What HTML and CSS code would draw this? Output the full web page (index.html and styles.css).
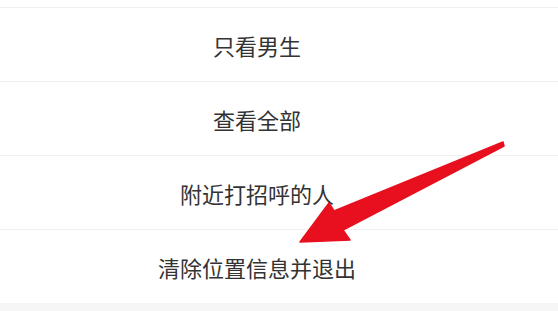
FILE: index.html
```html
<!DOCTYPE html>
<html lang="zh-CN">
<head>
<meta charset="utf-8">
<link rel="stylesheet" href="styles.css">
</head>
<body>
<div class="sheet">
  <div class="top"></div>
  <ul class="menu">
    <li class="item">只看男生</li>
    <li class="item">查看全部</li>
    <li class="item">附近打招呼的人</li>
    <li class="item">清除位置信息并退出</li>
  </ul>
  <div class="footer"></div>
  <svg class="arrow" width="558" height="311" viewBox="0 0 558 311">
    <path d="M503 142 L334 211 L329 203 L300 242 L350 240 L343 230 L504 146 Z" fill="#e8101e" stroke="#e8101e" stroke-width="1.5" stroke-linejoin="round"/>
  </svg>
</div>
</body>
</html>
```

FILE: styles.css
```css
html, body {
  margin: 0;
  padding: 0;
  background: #ffffff;
}
.sheet {
  position: relative;
  width: 558px;
  height: 311px;
  overflow: hidden;
  display: flex;
  flex-direction: column;
}
.top {
  height: 7px;
  flex: none;
}
.menu {
  list-style: none;
  margin: 0;
  padding: 0;
}
.item {
  height: 73px;
  border-top: 1px solid #f0f0f0;
  display: flex;
  align-items: center;
  justify-content: center;
  padding-right: 44px;
  font-family: "Noto Sans CJK SC", "Noto Sans", sans-serif;
  font-size: 22px;
  color: #333333;
}
.footer {
  flex: 1;
  background: #f6f6f6;
}
.arrow {
  position: absolute;
  left: 0;
  top: 0;
}
```
